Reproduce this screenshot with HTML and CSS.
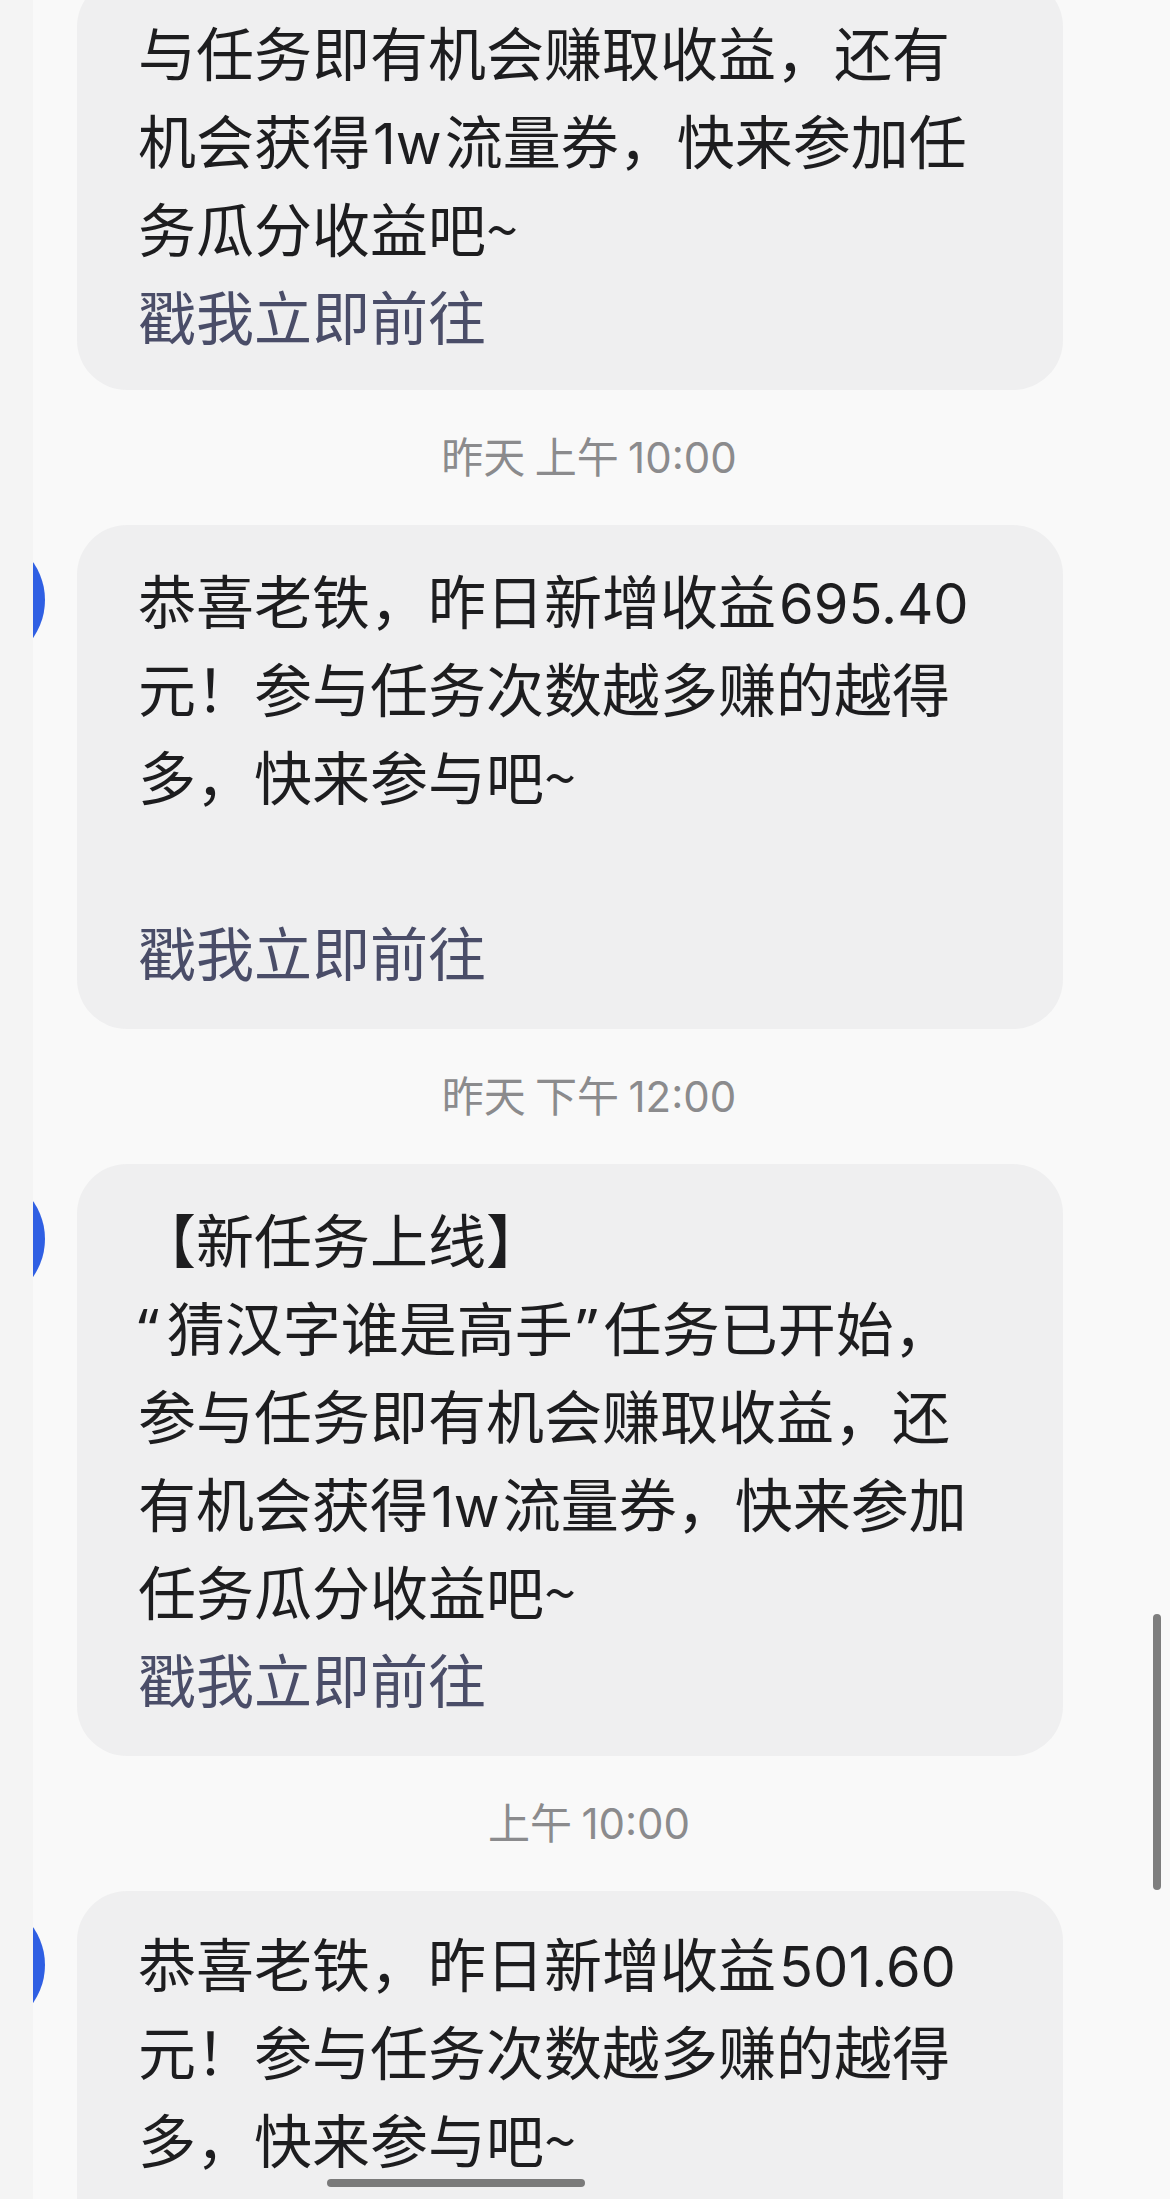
FILE: index.html
```html
<!DOCTYPE html>
<html lang="zh-CN">
<head>
<meta charset="utf-8">
<title>消息</title>
<link rel="stylesheet" href="styles.css">
</head>
<body>
<div class="screen">
  <div class="feed">
    <div class="msg msg-first">
      <div class="bubble bubble-first">
        <div class="line">与任务即有机会赚取收益，还有</div>
        <div class="line">机会获得<span class="num">1w</span>流量券，快来参加任</div>
        <div class="line">务瓜分收益吧~</div>
        <div class="line link">戳我立即前往</div>
      </div>
    </div>

    <div class="time">昨天 上午 <span class="tnum">10:00</span></div>

    <div class="msg">
      <div class="avatar"><div class="avatar-dot"></div></div>
      <div class="bubble">
        <div class="line">恭喜老铁，昨日新增收益<span class="num">695.40</span></div>
        <div class="line">元！参与任务次数越多赚的越得</div>
        <div class="line">多，快来参与吧~</div>
        <div class="line"></div>
        <div class="line link">戳我立即前往</div>
      </div>
    </div>

    <div class="time">昨天 下午 <span class="tnum">12:00</span></div>

    <div class="msg">
      <div class="avatar"><div class="avatar-dot"></div></div>
      <div class="bubble">
        <div class="line">【新任务上线】</div>
        <div class="line"><span class="q q-open">“</span>猜汉字谁是高手<span class="q q-close">”</span>任务已开始，</div>
        <div class="line">参与任务即有机会赚取收益，还</div>
        <div class="line">有机会获得<span class="num">1w</span>流量券，快来参加</div>
        <div class="line">任务瓜分收益吧~</div>
        <div class="line link">戳我立即前往</div>
      </div>
    </div>

    <div class="time">上午 <span class="tnum">10:00</span></div>

    <div class="msg msg-last">
      <div class="avatar"><div class="avatar-dot"></div></div>
      <div class="bubble">
        <div class="line">恭喜老铁，昨日新增收益<span class="num">501.60</span></div>
        <div class="line">元！参与任务次数越多赚的越得</div>
        <div class="line">多，快来参与吧~</div>
        <div class="line"></div>
        <div class="line link">戳我立即前往</div>
      </div>
    </div>
  </div>

  <div class="scrollbar"></div>
  <div class="home-indicator"></div>
</div>
</body>
</html>
```

FILE: styles.css
```css
html, body {
  margin: 0;
  padding: 0;
}

body {
  width: 1170px;
  height: 2199px;
  overflow: hidden;
  background: #f9f9f9;
  font-family: "Noto Sans CJK SC", "Noto Sans", sans-serif;
}

.screen {
  position: relative;
  width: 1170px;
  height: 2199px;
  overflow: hidden;
  background: linear-gradient(to right, #f4f4f4 0, #f4f4f4 33px, #f9f9f9 33px, #f9f9f9 100%);
}

.feed {
  display: flex;
  flex-direction: column;
}

.msg {
  position: relative;
  display: flex;
}

.msg-first {
  margin-top: -23px;
}

.bubble {
  margin-left: 77px;
  width: 986px;
  box-sizing: border-box;
  padding: 30px 30px 34px 61px;
  background: #efeff0;
  border-radius: 50px;
  color: #1d1d1f;
  font-size: 58px;
  line-height: 88px;
}

.bubble-first {
  padding-bottom: 31px;
}

.msg-last .bubble {
  padding-top: 27px;
}

.line {
  height: 88px;
  white-space: nowrap;
}

.link {
  color: #4a4d68;
}

.num {
  font-family: "Inter", "Noto Sans", sans-serif;
  font-size: 56px;
  margin: 0 3px 0 3px;
}

.q {
  font-family: "Noto Sans", "Inter", sans-serif;
}

.q-open {
  margin-right: 8px;
}

.q-close {
  margin-left: 4px;
  margin-right: 6px;
}

.time {
  margin: 41px 0 46px;
  height: 48px;
  line-height: 48px;
  text-align: center;
  color: #8b8b8d;
  font-size: 42px;
  padding-left: 8px;
}

.tnum {
  font-family: "Inter", "Noto Sans", sans-serif;
}

.avatar {
  position: absolute;
  left: 33px;
  top: 37px;
  width: 12px;
  height: 76px;
  overflow: hidden;
}

.msg-last .avatar {
  top: 36px;
}

.avatar-dot {
  position: absolute;
  left: -120px;
  top: -28px;
  width: 132px;
  height: 132px;
  border-radius: 50%;
  background: #2f5fe3;
}

.scrollbar {
  position: absolute;
  left: 1153px;
  top: 1614px;
  width: 8px;
  height: 276px;
  border-radius: 4px;
  background: #7e7e7e;
}

.home-indicator {
  position: absolute;
  left: 327px;
  top: 2179px;
  width: 258px;
  height: 8px;
  border-radius: 4px;
  background: #7a7a7a;
}
```
